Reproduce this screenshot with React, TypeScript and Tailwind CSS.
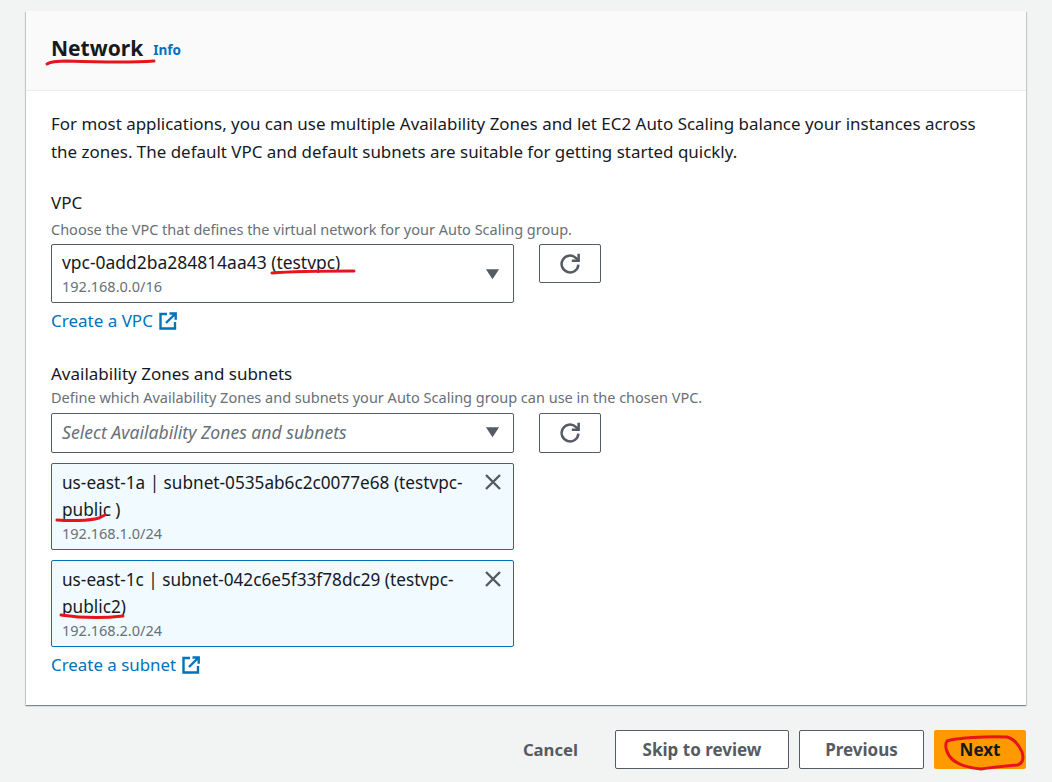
const font = "font-['Noto_Sans',sans-serif]";

function CaretDown() {
  return (
    <svg viewBox="0 0 16 12" className="w-[15px] h-[12px] text-[#545b64]">
      <path d="M1 1h14L8 11.5z" fill="currentColor" />
    </svg>
  );
}

function RefreshButton({ h }: { h: string }) {
  return (
    <button type="button" className={`${h} w-[62px] ml-[25px] shrink-0 flex items-center justify-center bg-white border border-[#545b64] rounded-[2px]`}>
      <svg viewBox="0 0 20 20" className="w-[24px] h-[24px] text-[#545b64]" fill="none" stroke="currentColor" strokeWidth="2.1">
        <path d="M17 10.5a7 7 0 1 1-2.2-5.6L17 7" />
        <path d="M17.2 1.5V7.2H11.5" />
      </svg>
    </button>
  );
}

function ExternalIcon() {
  return (
    <svg viewBox="0 0 18 18" className="w-[18px] h-[18px] text-[#0073bb] ml-[6px]" fill="none" stroke="currentColor" strokeWidth="2.4">
      <path d="M8 2H1.5v14.5H16V10" />
      <path d="M7 11l9-9M10.5 1.5h6.2v6.2" />
    </svg>
  );
}

function Token({ line1, line2, cidr }: { line1: string; line2: string; cidr: string }) {
  return (
    <div className="w-[463px] h-[87px] bg-[#f1faff] border border-[#0073bb] rounded-[2px] pl-[10px] pr-[11px] pt-[5px] flex justify-between">
      <div>
        <div className="text-[17.2px] leading-[27px] text-[#16191f] whitespace-nowrap">{line1}</div>
        <div className="text-[17.2px] leading-[27px] text-[#16191f] whitespace-nowrap">{line2}</div>
        <div className="text-[14.5px] leading-[20px] text-[#687078]">{cidr}</div>
      </div>
      <svg viewBox="0 0 18 18" className="w-[18px] h-[18px] mt-[4px] text-[#545b64]" fill="none" stroke="currentColor" strokeWidth="2.4">
        <path d="M2 2l14 14M16 2L2 16" />
      </svg>
    </div>
  );
}

export default function App() {
  return (
    <div className={`${font} relative w-[1052px] h-[782px] overflow-hidden bg-[#f2f3f3] pt-[11px] px-[26px]`}>
      {/* card */}
      <div className="w-[1000px] h-[694px] bg-white shadow-[0_1px_1px_0_rgba(0,28,36,0.3),1px_1px_1px_0_rgba(0,28,36,0.15),-1px_1px_1px_0_rgba(0,28,36,0.15)]">
        <div className="h-[80px] bg-[#fafafa] border-b border-[#eaeded] pl-[25px] pt-[21px] flex items-baseline">
          <span className="text-[21px] leading-[32px] font-bold text-[#16191f]">Network</span>
          <span className="ml-[10px] text-[13.5px] font-bold text-[#0073bb] -translate-y-[1px]">Info</span>
        </div>
        <div className="pl-[25px] pt-[19px]">
          <p className="w-[950px] text-[16.95px] leading-[28px] text-[#16191f]">
            For most applications, you can use multiple Availability Zones and let EC2 Auto Scaling balance your instances across the zones. The default VPC and default subnets are suitable for getting started quickly.
          </p>

          <div className="mt-[25px] text-[17px] leading-[24px] text-[#16191f]">VPC</div>
          <div className="mt-[4px] text-[14.5px] leading-[20px] text-[#687078]">Choose the VPC that defines the virtual network for your Auto Scaling group.</div>
          <div className="mt-[5px] flex items-start">
            <div className="w-[463px] h-[59px] bg-white border border-[#545b64] rounded-[2px] pl-[10px] pr-[13px] flex items-center justify-between">
              <div>
                <div className="text-[17.45px] leading-[24px] text-[#16191f]">vpc-0add2ba284814aa43 (testvpc)</div>
                <div className="text-[14.5px] leading-[24px] text-[#687078]">192.168.0.0/16</div>
              </div>
              <CaretDown />
            </div>
            <RefreshButton h="h-[39px]" />
          </div>
          <div className="mt-[5px] flex items-center h-[26px] text-[17px] text-[#0073bb]">
            Create a VPC
            <ExternalIcon />
          </div>

          <div className="mt-[28px] text-[17px] leading-[24px] text-[#16191f]">Availability Zones and subnets</div>
          <div className="mt-[1px] text-[14.5px] leading-[20px] text-[#687078]">Define which Availability Zones and subnets your Auto Scaling group can use in the chosen VPC.</div>
          <div className="mt-[6px] flex items-start">
            <div className="w-[463px] h-[40px] bg-white border border-[#545b64] rounded-[2px] pl-[10px] pr-[13px] pb-[2px] flex items-center justify-between">
              <span className="text-[17.6px] italic text-[#687078]">Select Availability Zones and subnets</span>
              <CaretDown />
            </div>
            <RefreshButton h="h-[40px]" />
          </div>
          <div className="mt-[10px] flex flex-col gap-[10px]">
            <Token line1="us-east-1a | subnet-0535ab6c2c0077e68 (testvpc-" line2="public )" cidr="192.168.1.0/24" />
            <Token line1="us-east-1c | subnet-042c6e5f33f78dc29 (testvpc-" line2="public2)" cidr="192.168.2.0/24" />
          </div>
          <div className="mt-[5px] flex items-center h-[26px] text-[16.9px] text-[#0073bb]">
            Create a subnet
            <ExternalIcon />
          </div>
        </div>
      </div>

      {/* footer buttons */}
      <div className="mt-[25px] flex items-center justify-end text-[17px] font-bold">
        <span className="text-[#545b64] text-[16.7px] mr-[37px]">Cancel</span>
        <button type="button" className="h-[39px] w-[174px] bg-white border border-[#545b64] rounded-[2px] text-[#545b64]">Skip to review</button>
        <button type="button" className="h-[39px] w-[125px] ml-[10px] bg-white border border-[#545b64] rounded-[2px] text-[#545b64]">Previous</button>
        <button type="button" className="h-[39px] w-[92px] ml-[10px] bg-[#ff9900] rounded-[2px] text-[#16191f]">Next</button>
      </div>

      {/* red marker annotations */}
      <svg viewBox="0 0 1052 782" className="absolute inset-0 w-[1052px] h-[782px] pointer-events-none" fill="none" stroke="#e8141c" strokeWidth="3" strokeLinecap="round" strokeLinejoin="round">
        <path d="M47 64c3-2 8-3 20-3c30 1 60 2 87 0" />
        <path d="M272 273c25-2 55-2 82-2" />
        <path d="M57 520c12 1 32 1 42-2c2-1 4-2 6-3" />
        <path d="M61 615c20 3 45 3 62 1" />
        <path d="M947 741c8-3 40-5 60-4c7 2 12 8 15 15c2 6 1 12-5 13c-12 1-25 2-36 4c-10-1-22-4-28-9c-6-5-9-14-6-19z" />
      </svg>
    </div>
  );
}
